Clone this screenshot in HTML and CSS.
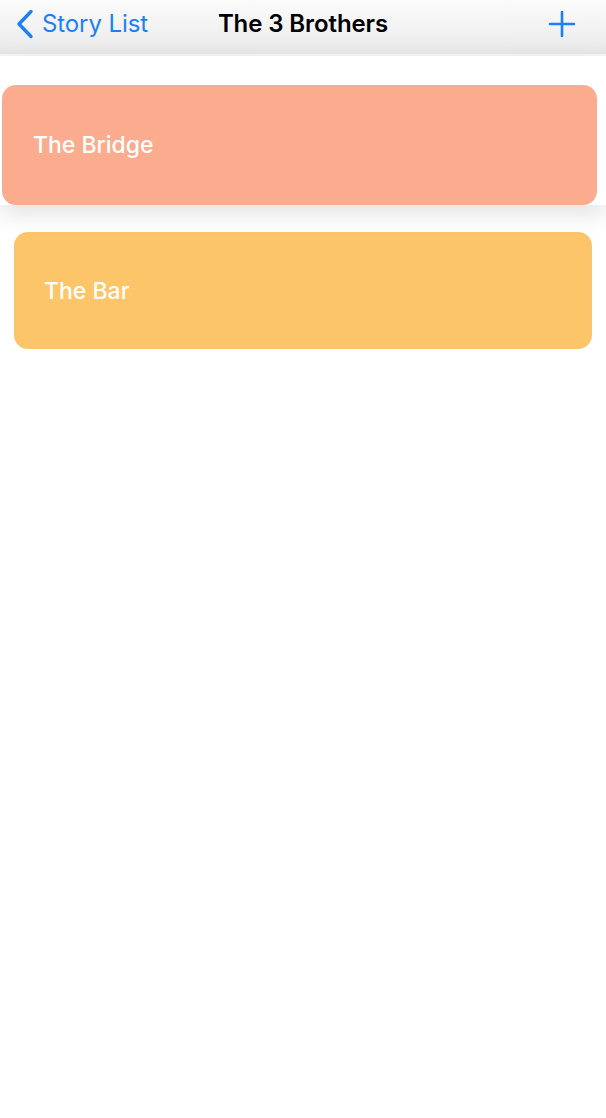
FILE: index.html
```html
<!DOCTYPE html>
<html>
<head>
<meta charset="utf-8">
<link rel="stylesheet" href="styles.css">
</head>
<body>
<header class="navbar">
  <a class="back">
    <svg class="chev" width="18" height="30" viewBox="0 0 18 30"><path d="M15 2.5 L3 15 L15 27.5" fill="none" stroke="#1b80f6" stroke-width="3.4" stroke-linecap="round" stroke-linejoin="round"/></svg>
    <span>Story List</span>
  </a>
  <h1 class="title">The 3 Brothers</h1>
  <button class="add">
    <svg width="28" height="28" viewBox="0 0 28 28"><path d="M14 2 V26 M2 14 H26" stroke="#1b80f6" stroke-width="2.6" stroke-linecap="round"/></svg>
  </button>
</header>
<main class="list">
  <div class="row lifted">
    <div class="card salmon"><span>The Bridge</span></div>
  </div>
  <div class="row">
    <div class="card amber"><span>The Bar</span></div>
  </div>
</main>
</body>
</html>
```
FILE: styles.css
```css
html, body {
  margin: 0;
  background: #ffffff;
  font-family: "Inter", "Roboto", "Liberation Sans", sans-serif;
}
.navbar {
  display: flex;
  align-items: center;
  justify-content: space-between;
  padding: 0 30px 6px 16px;
  box-sizing: border-box;
  background: linear-gradient(#fbfbfb, #f1f1f1 60%, #e6e6e6);
  border-bottom: 2px solid #f5f5f5;
  height: 56px;
  position: relative;
}
.back {
  display: flex;
  align-items: center;
  gap: 8px;
  color: #1b80f6;
  font-size: 24px;
  letter-spacing: -0.1px;
}
.back span { margin-top: -1px; }
.title {
  margin: 0;
  font-size: 24px;
  font-weight: 600;
  color: #000;
  letter-spacing: -0.1px;
  position: absolute;
  left: 0;
  right: 0;
  top: 9px;
  text-align: center;
  pointer-events: none;
}
.add {
  border: 0;
  background: none;
  padding: 0;
  display: flex;
}
.list {
  display: flex;
  flex-direction: column;
}
.row {
  padding: 27px 14px 0 14px;
}
.row.lifted {
  padding: 29px 9px 0 2px;
  background: #fff;
  box-shadow: 0 10px 22px rgba(0,0,0,0.11);
  position: relative;
  z-index: 1;
}
.card {
  border-radius: 14px;
  display: flex;
  align-items: center;
  color: #fff;
  font-size: 23px;
  font-weight: 500;
}
.card.salmon {
  background: #fbac8f;
  height: 120px;
  padding-left: 31px;
}
.card.amber {
  background: #fdc56a;
  height: 117px;
  padding-left: 30px;
}
```
